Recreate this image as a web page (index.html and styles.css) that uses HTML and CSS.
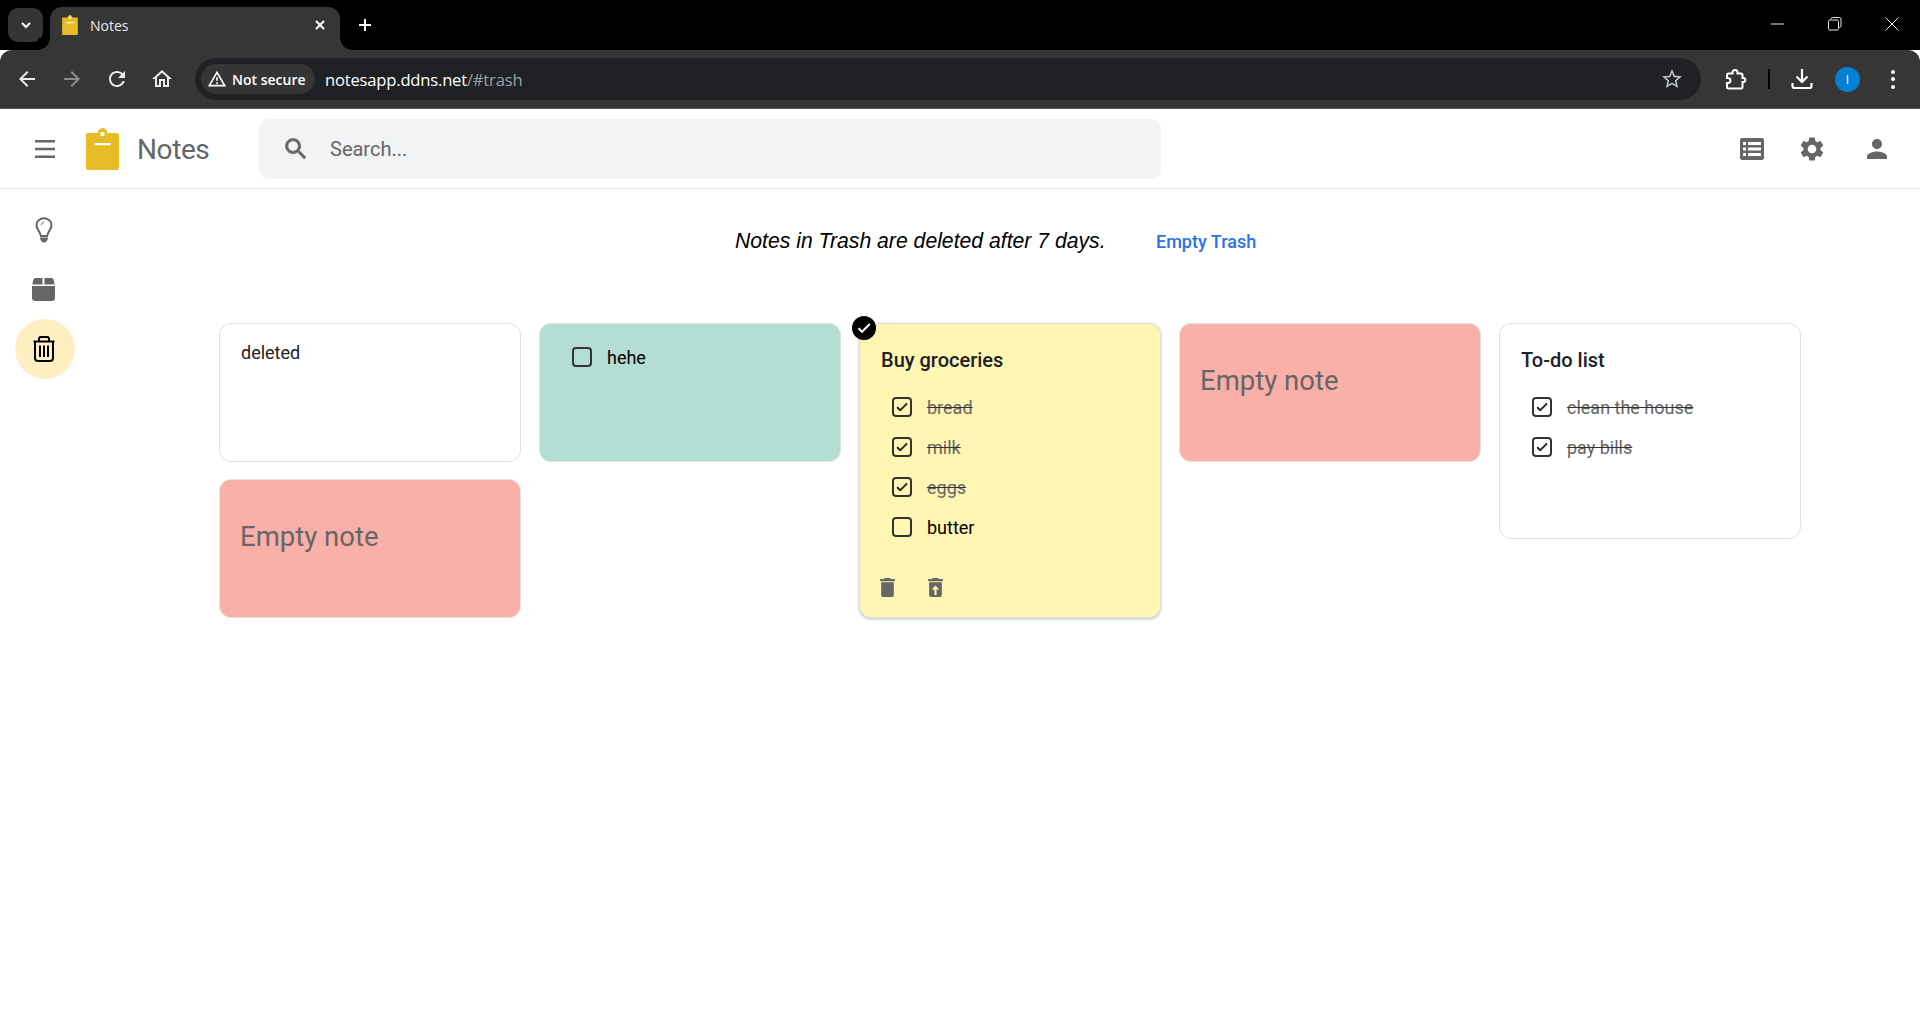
FILE: index.html
```html
<!DOCTYPE html>
<html lang="en">
<head>
    <meta charset="UTF-8">
    <meta name="viewport" content="width=device-width, initial-scale=1.0">
    <title>Notes</title>
    <link rel="stylesheet" href="styles.css">
</head>
<body>
    <svg class="defs" width="0" height="0">
        <symbol id="logo" viewBox="0 0 33 42">
            <path d="M2 5h9.500C12 2 14 0 16.500 0S21 2 21.500 5H31c1.200 0 2 .800 2 2v33c0 1.200-.800 2-2 2H2c-1.200 0-2-.800-2-2V7c0-1.200.800-2 2-2z"/>
            <circle class="logo-cut" cx="16.500" cy="6" r="2.200"/>
            <rect class="logo-cut" x="8.500" y="15" width="16" height="2.200"/>
        </symbol>
        <symbol id="check" viewBox="0 0 24 24"><path d="M9 16.170L4.830 12l-1.420 1.410L9 19 21 7l-1.410-1.410z"/></symbol>
    </svg>

    <!-- browser -->
    <div class="tabstrip">
        <div class="tab-search"><svg width="14" height="14" viewBox="0 0 14 14"><path class="line" d="M3 5l4 4 4-4"/></svg></div>
        <div class="tab">
            <svg class="tab-icon" width="16" height="20"><use href="#logo"/></svg>
            <span class="tab-title">Notes</span>
            <svg class="tab-close" width="12" height="12" viewBox="0 0 12 12"><path class="line" d="M2 2l8 8M10 2l-8 8"/></svg>
        </div>
        <svg class="tab-new" width="14" height="14" viewBox="0 0 14 14"><path class="line" d="M7 1v12M1 7h12"/></svg>
        <div class="window-controls">
            <svg width="14" height="14" viewBox="0 0 14 14"><path class="thin" d="M0 7h13"/></svg>
            <svg width="14" height="14" viewBox="0 0 14 14"><path class="thin" d="M3 2.500V2c0-.800.600-1.500 1.500-1.500h7c1 0 1.500.700 1.500 1.500v7c0 .800-.500 1.500-1.500 1.500H11"/><rect class="thin" x=".5" y="3" width="10" height="10" rx="1.500"/></svg>
            <svg width="14" height="14" viewBox="0 0 14 14"><path class="thin" d="M.5.500l13 13M13.500.500l-13 13"/></svg>
        </div>
    </div>
    <div class="toolbar">
        <svg class="tool-icon" viewBox="0 0 24 24"><path d="M20 11H7.830l5.590-5.590L12 4l-8 8 8 8 1.410-1.410L7.830 13H20v-2z"/></svg>
        <svg class="tool-icon dim" viewBox="0 0 24 24"><path d="M4 11h12.170l-5.590-5.590L12 4l8 8-8 8-1.410-1.410L16.170 13H4v-2z"/></svg>
        <svg class="tool-icon" viewBox="0 0 24 24"><path d="M17.650 6.350C16.200 4.900 14.210 4 12 4c-4.420 0-7.990 3.580-7.990 8s3.570 8 7.990 8c3.730 0 6.840-2.550 7.730-6h-2.080c-.820 2.330-3.040 4-5.650 4-3.310 0-6-2.690-6-6s2.690-6 6-6c1.660 0 3.140.690 4.220 1.780L13 11h7V4l-2.350 2.350z"/></svg>
        <svg class="tool-icon" viewBox="0 0 24 24"><path d="M12 5.690l5 4.500V18h-2v-6H9v6H7v-7.810l5-4.500M12 3L2 12h3v8h6v-6h2v6h6v-8h3L12 3z"/></svg>
        <div class="omnibox">
            <div class="chip">
                <svg width="20" height="20" viewBox="0 0 24 24"><path d="M1 21h22L12 2 1 21zm3.470-2L12 5.990 19.530 19H4.470zM11 16h2v2h-2zm0-6h2v4h-2z"/></svg>
                <span>Not secure</span>
            </div>
            <div class="url">notesapp.ddns.net<span class="url-rest">/#trash</span></div>
            <svg class="star" viewBox="0 0 24 24"><path d="M22 9.240l-7.190-.620L12 2 9.190 8.630 2 9.240l5.460 4.730L5.820 21 12 17.270 18.180 21l-1.630-7.030L22 9.240zM12 15.400l-3.760 2.270 1-4.280-3.320-2.880 4.380-.380L12 6.100l1.710 4.040 4.380.380-3.320 2.880 1 4.280L12 15.400z"/></svg>
        </div>
        <div class="toolbar-right">
            <svg class="puzzle" width="21" height="21" viewBox="0 0 21 21"><path d="M2.500 4.500H6.500V3.500a2.500 2.500 0 0 1 5 0V4.500H15c1 0 1.500.5 1.500 1.500V9h.8a2 2 0 0 1 0 4h-.8v5c0 1-.5 1.500-1.500 1.500H2.500c-1 0-1.500-.5-1.500-1.500v-4h1a2.500 2.500 0 0 0 0-5H1V6c0-1 .5-1.500 1.500-1.500z"/></svg>
            <div class="toolbar-sep"></div>
            <svg class="download" width="22" height="22" viewBox="0 0 22 22"><path d="M11 1v13M5.500 8.500L11 14l5.500-5.500M1.500 15v3c0 1 .700 2 2 2h15c1.300 0 2-1 2-2v-3"/></svg>
            <div class="avatar">I</div>
            <div class="dots"><i></i><i></i><i></i></div>
        </div>
    </div>

    <!-- app -->
    <header class="app-header">
        <svg class="menu-icon" viewBox="0 0 20 18"><path d="M0 0h20v2.600H0zM0 7.700h20v2.600H0zM0 15.400h20V18H0z"/></svg>
        <svg class="logo"><use href="#logo"/></svg>
        <div class="app-name">Notes</div>
        <div class="search">
            <svg class="search-icon" viewBox="0 0 24 24"><path d="M15.500 14h-.790l-.280-.270C15.410 12.590 16 11.110 16 9.500 16 5.910 13.090 3 9.500 3S3 5.910 3 9.500 5.910 16 9.500 16c1.610 0 3.090-.590 4.230-1.570l.270.280v.790l5 4.990L20.490 19l-4.990-5zm-6 0C7.010 14 5 11.990 5 9.500S7.010 5 9.500 5 14 7.010 14 9.500 11.990 14 9.500 14z"/></svg>
            <span>Search...</span>
        </div>
        <div class="header-actions">
            <svg class="list-icon" viewBox="0 0 24 22"><path fill-rule="evenodd" d="M2 0h20c1.100 0 2 .900 2 2v18c0 1.100-.900 2-2 2H2c-1.100 0-2-.900-2-2V2C0 .900.900 0 2 0zm1 4v3h3V4H3zm5 0v3h13V4H8zM3 9.500v3h3v-3H3zm5 0v3h13v-3H8zM3 15v3h3v-3H3zm5 0v3h13v-3H8z"/></svg>
            <svg class="gear-icon" viewBox="2 2 20 20"><path d="M19.140 12.940c.040-.300.060-.610.060-.940 0-.320-.020-.640-.070-.940l2.030-1.580c.180-.140.230-.410.120-.610l-1.920-3.320c-.120-.220-.370-.290-.590-.220l-2.390.960c-.500-.380-1.030-.700-1.620-.940l-.360-2.540c-.040-.240-.240-.410-.480-.410h-3.840c-.240 0-.430.170-.47.410l-.360 2.540c-.590.240-1.130.570-1.620.940l-2.390-.960c-.220-.080-.470 0-.590.220L2.740 8.870c-.120.210-.080.470.120.610l2.030 1.580c-.050.300-.090.630-.09.940s.020.640.07.940l-2.030 1.580c-.180.140-.230.410-.12.610l1.920 3.320c.120.220.370.290.590.220l2.390-.960c.500.380 1.030.700 1.620.940l.360 2.540c.050.240.240.410.480.410h3.840c.240 0 .440-.170.470-.410l.360-2.540c.590-.240 1.130-.560 1.620-.940l2.390.960c.220.080.470 0 .590-.220l1.920-3.320c.120-.220.070-.470-.120-.610l-2.010-1.580zM12 15.600c-1.980 0-3.600-1.620-3.600-3.600s1.620-3.600 3.600-3.600 3.600 1.620 3.600 3.600-1.620 3.600-3.600 3.600z"/></svg>
            <svg class="person-icon" viewBox="4 4 16 16"><path d="M12 12c2.210 0 4-1.790 4-4s-1.790-4-4-4-4 1.790-4 4 1.790 4 4 4zm0 2c-2.670 0-8 1.340-8 4v2h16v-2c0-2.660-5.330-4-8-4z"/></svg>
        </div>
    </header>

    <div class="app-body">
        <nav class="sidebar">
            <div class="side-item">
                <svg width="18" height="26" viewBox="0 0 18 26"><path class="bulb" d="M9 1.200C4.800 1.200 1.500 4.300 1.500 8.200c0 2 .9 3.600 2 5.400 1 1.700 2 3.500 2.400 5.400h6.200c.4-1.900 1.400-3.700 2.400-5.400 1.100-1.800 2-3.400 2-5.400 0-3.900-3.300-7-7.500-7z"/><path class="bulb-glint" d="M6.500 8c0-1.500 1-2.700 2.500-3"/><path d="M5 20.500h8c0 2.500-1.700 5-4 5s-4-2.500-4-5z"/></svg>
            </div>
            <div class="side-item">
                <svg width="23" height="23" viewBox="0 0 23 23"><path d="M3.500 0h7v6.500H0.300L1.300 2C1.600.800 2.400 0 3.500 0zM12.500 0h7c1.100 0 1.900.800 2.200 2l1 4.500H12.500V0zM0 8h23v12c0 1.700-1.300 3-3 3H3c-1.700 0-3-1.300-3-3V8z"/></svg>
            </div>
            <div class="side-item active">
                <svg width="22" height="26" viewBox="0 0 22 26"><path class="trash-line" d="M.5 5.500h21M6 5.500V3c0-1.100.9-2 2-2h6c1.100 0 2 .9 2 2v2.500M2 5.500V22c0 1.700 1.300 3 3 3h12c1.700 0 3-1.300 3-3V5.500M7 9.500v11.500M11 9.500v11.500M15 9.500v11.500"/></svg>
            </div>
        </nav>

        <main class="content">
            <div class="trash-bar">
                <span class="trash-msg">Notes in Trash are deleted after 7 days.</span>
                <a class="trash-empty">Empty Trash</a>
            </div>

            <div class="board">
                <div class="board-col">
                    <div class="note note-short">
                        <div class="note-text">deleted</div>
                    </div>
                    <div class="note note-short note-pink">
                        <div class="note-empty">Empty note</div>
                    </div>
                </div>

                <div class="board-col">
                    <div class="note note-short note-teal">
                        <div class="todo todo-solo"><span class="box"></span><span>hehe</span></div>
                    </div>
                </div>

                <div class="board-col">
                    <div class="note note-yellow note-selected">
                        <div class="select-mark"><svg width="16" height="16"><use href="#check"/></svg></div>
                        <div class="note-title">Buy groceries</div>
                        <div class="todo done"><span class="box"><svg width="14" height="14"><use href="#check"/></svg></span><span class="todo-label">bread</span></div>
                        <div class="todo done"><span class="box"><svg width="14" height="14"><use href="#check"/></svg></span><span class="todo-label">milk</span></div>
                        <div class="todo done"><span class="box"><svg width="14" height="14"><use href="#check"/></svg></span><span class="todo-label">eggs</span></div>
                        <div class="todo"><span class="box"></span><span class="todo-label">butter</span></div>
                        <div class="note-actions">
                            <svg viewBox="5 3 14 18"><path d="M6 19c0 1.100.900 2 2 2h8c1.100 0 2-.900 2-2V7H6v12zM19 4h-3.500l-1-1h-5l-1 1H5v2h14V4z"/></svg>
                            <svg viewBox="5 3 14 18"><path d="M19 4h-3.500l-1-1h-5l-1 1H5v2h14zM6 7v12c0 1.100.900 2 2 2h8c1.100 0 2-.900 2-2V7H6zm7 7v5h-2v-5H8.500l3.500-4 3.500 4H13z"/></svg>
                        </div>
                    </div>
                </div>

                <div class="board-col">
                    <div class="note note-short note-pink">
                        <div class="note-empty">Empty note</div>
                    </div>
                </div>

                <div class="board-col">
                    <div class="note note-list">
                        <div class="note-title">To-do list</div>
                        <div class="todo done"><span class="box"><svg width="14" height="14"><use href="#check"/></svg></span><span class="todo-label">clean the house</span></div>
                        <div class="todo done"><span class="box"><svg width="14" height="14"><use href="#check"/></svg></span><span class="todo-label">pay bills</span></div>
                    </div>
                </div>
            </div>
        </main>
    </div>
</body>
</html>
```

FILE: styles.css
```css
html, body { margin: 0; padding: 0; height: 100%; overflow: hidden; background: #fff; font-family: Roboto, sans-serif; }
svg { display: block; flex: none; }
.defs { position: absolute; }
#logo path { fill: #e8bc26; }
.logo-cut { fill: #fff; }

/* browser bars */
.tabstrip { display: flex; align-items: flex-start; height: 50px; background: #000; }
.tab-search { display: flex; align-items: center; justify-content: center; width: 35px; height: 34px; margin: 8px 7px 0 8px; border-radius: 10px; background: #353535; }
.line { fill: none; stroke: #fff; stroke-width: 2; }
.thin { fill: none; stroke: #e6e6e6; stroke-width: 1; }
.tab { position: relative; display: flex; align-items: center; width: 290px; height: 43px; margin-top: 7px; padding: 0 14px 7px 12px; box-sizing: border-box; border-radius: 12px 12px 0 0; background: #363636; color: #e8eaed; }
.tab::before, .tab::after { content: ""; position: absolute; bottom: 0; width: 12px; height: 12px; }
.tab::before { left: -12px; background: radial-gradient(circle at 0 0, #000 11.5px, #363636 12px); }
.tab::after { right: -12px; background: radial-gradient(circle at 100% 0, #000 11.5px, #363636 12px); }
.tab-icon { margin-right: 12px; }
.tab-title { flex: 1; font: 14px "Open Sans", sans-serif; }
.tab-new { margin: 18px 0 0 18px; }
.window-controls { display: flex; gap: 43px; margin: 17px 21px 0 auto; }

.toolbar { display: flex; align-items: center; height: 58px; border-bottom: 1px solid #5a5a5a; border-radius: 12px 12px 0 0; background: #363636; }
.tool-icon { width: 24px; height: 24px; margin-left: 16px; margin-right: 5px; fill: #e8eaed; }
.tool-icon:first-child { margin-left: 15px; }
.tool-icon.dim { fill: #8a8b8d; }
.omnibox { display: flex; align-items: center; width: 1506px; height: 42px; margin-left: 16px; padding-left: 6px; box-sizing: border-box; border-radius: 21px; background: #202124; }
.chip { display: flex; align-items: center; gap: 5px; width: 114px; height: 30px; padding-left: 6px; box-sizing: border-box; border-radius: 15px; background: #353535; color: #fff; font: 600 14px "Open Sans", sans-serif; }
.chip svg { fill: #fff; }
.url { margin-left: 10px; color: #fff; font: 16.600px "Open Sans", sans-serif; letter-spacing: -.2px; }
.url-rest { color: #9aa0a6; }
.star { width: 24px; height: 24px; margin-left: auto; margin-right: 17px; fill: #bdc1c6; }
.toolbar-right { display: flex; align-items: center; flex: 1; height: 100%; }
.puzzle { margin-left: 25px; fill: none; stroke: #fff; stroke-width: 2; }
.toolbar-sep { width: 2px; height: 20px; margin-left: 21px; background: #000; }
.download { margin-left: 21px; fill: none; stroke: #fff; stroke-width: 2.200; }
.avatar { display: flex; align-items: center; justify-content: center; width: 25px; height: 25px; margin-left: 22px; border-radius: 50%; background: #0481d4; color: #fff; font: 12px "Open Sans", sans-serif; }
.dots { display: flex; flex-direction: column; gap: 3.500px; margin-left: 31px; }
.dots i { width: 4px; height: 4px; border-radius: 50%; background: #fff; }

/* app header */
.app-header { display: flex; align-items: center; box-sizing: border-box; height: 80px; padding-top: 1px; border-bottom: 1px solid #e0e0e0; }
.menu-icon { width: 20px; height: 18px; margin-left: 35px; fill: #666; }
.logo { width: 33px; height: 42px; margin-left: 31px; }
.app-name { width: 122px; margin-left: 18px; color: #666; font-size: 28px; letter-spacing: -.4px; }
.search { display: flex; align-items: center; width: 902px; height: 60px; box-sizing: border-box; padding-left: 23px; border-radius: 10px; background: #f1f3f4; color: #666; font-size: 20px; }
.search-icon { width: 28px; height: 28px; margin-right: 20px; fill: #666; stroke: #666; stroke-width: .6; }
.header-actions { display: flex; align-items: center; margin-left: auto; margin-right: 33px; }
.header-actions svg { fill: #666; }
.list-icon { width: 24px; height: 22px; }
.gear-icon { width: 24px; height: 24px; margin-left: 36px; }
.person-icon { width: 20px; height: 20px; margin-left: 43px; }

/* body */
.app-body { display: flex; }
.sidebar { display: flex; flex-direction: column; width: 90px; padding: 10px 0 0 15px; box-sizing: border-box; }
.side-item { display: flex; align-items: center; justify-content: center; width: 60px; height: 60px; padding-right: 3px; box-sizing: border-box; fill: #666; }
.side-item:first-child { padding-top: 2px; }
.side-item.active { border-radius: 50%; background: #feefc3; }
.bulb { fill: none; stroke: #666; stroke-width: 2; }
.bulb-glint { fill: none; stroke: #666; stroke-width: 1; }
.trash-line { fill: none; stroke: #000; stroke-width: 2; }

.content { flex: 1; padding: 40px 0 0 129px; }
.trash-bar { display: flex; align-items: center; height: 24px; margin-bottom: 70px; padding-left: 516px; }
.trash-msg { width: 421px; font: italic 21.200px "Liberation Sans", sans-serif; color: #000; }
.trash-empty { color: #2a72e8; font-size: 18px; font-weight: 500; }

.board { display: flex; gap: 18px; }
.board-col { display: flex; flex-direction: column; gap: 17px; width: 302px; }
.note { position: relative; box-sizing: border-box; border: 1px solid #e0e0e0; border-radius: 12px; background: #fff; }
.note-short { height: 139px; }
.note-pink { background: #faafa8; }
.note-teal { background: #b4ddd3; }
.note-yellow { background: #fff6b3; height: 295px; box-shadow: 0 1px 3px rgba(60, 64, 67, .35); }
.note-list { height: 216px; }
.note-text { padding: 17px 21px; font-size: 18px; line-height: 24px; color: #202124; }
.note-empty { padding: 39px 20px; font-size: 27.500px; line-height: 36px; color: #666; }
.note-title { padding: 24px 21px 15px; font-size: 20px; font-weight: 500; line-height: 24px; color: #202124; }
.select-mark { position: absolute; top: -8px; left: -8px; display: flex; align-items: center; justify-content: center; width: 24px; height: 24px; border-radius: 50%; background: #000; fill: #fff; stroke: #fff; stroke-width: 1.500; }

.todo { display: flex; align-items: center; gap: 15px; height: 40px; padding-left: 32px; font-size: 18px; color: #000; }
.todo-solo { margin-top: 13px; }
.box { display: flex; align-items: center; justify-content: center; width: 20px; height: 20px; box-sizing: border-box; border: 2px solid #333; border-radius: 4px; fill: #111; stroke: #111; stroke-width: 1.500; }
.done .todo-label { color: #666; text-decoration: line-through; text-decoration-color: #333; }
.note-actions { display: flex; gap: 31px; margin-top: 31px; padding-left: 19px; }
.note-actions svg { width: 17px; height: 19px; fill: #666; }
```
